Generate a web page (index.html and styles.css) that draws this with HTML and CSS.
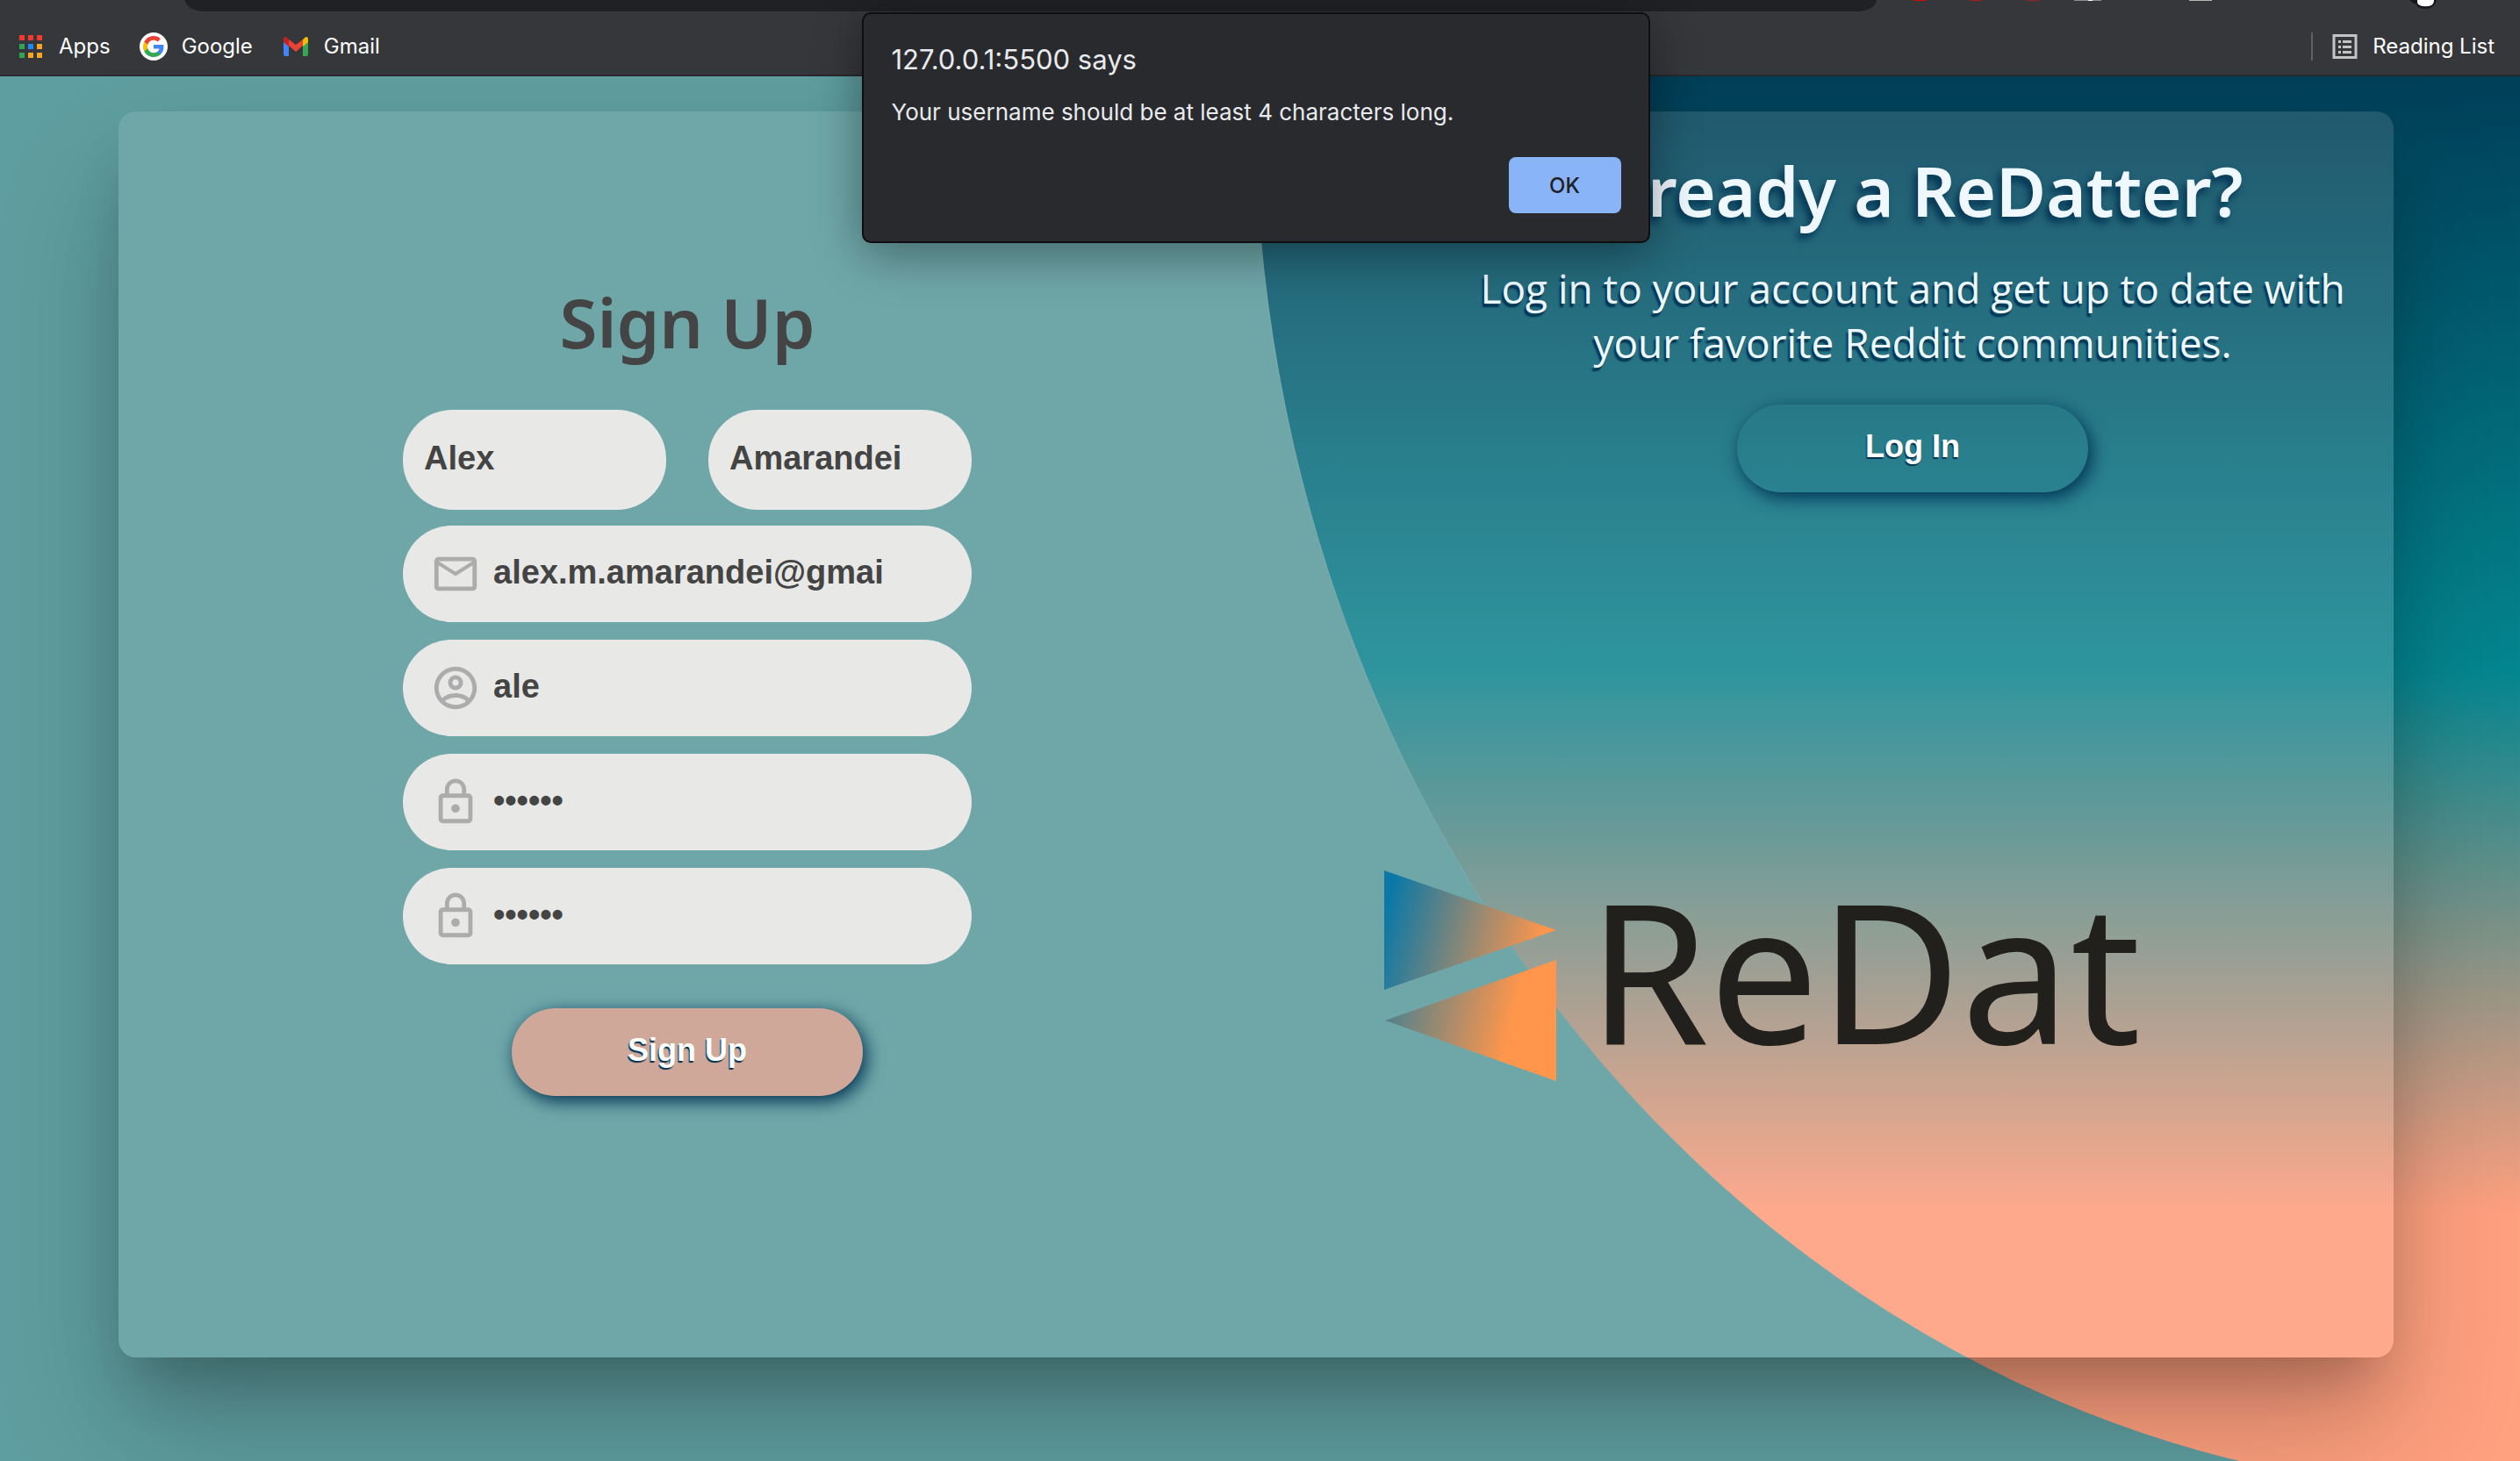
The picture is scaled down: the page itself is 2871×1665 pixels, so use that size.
FILE: index.html
```html
<!DOCTYPE html>
<html lang="en">
<head>
<meta charset="utf-8">
<title>ReDat</title>
<link rel="stylesheet" href="styles.css">
</head>
<body>
<header class="toolbar">
  <div class="address-row">
    <div class="omnibox"></div>
    <svg class="extensions" viewBox="0 0 733 14" aria-hidden="true">
      <path d="M42 0h14v1H42z" fill="#d60a0a"/>
      <path d="M106 0h14v1h-14z" fill="#a81a20"/>
      <path d="M167 0h22q-11 3-22 0z" fill="#7a2a2e"/>
      <path d="M225 0h31v1h-31z" fill="#8d918d"/>
      <path d="M241 0h5v1h-5z" fill="#fff"/>
      <path d="M356 0h26v1h-26z" fill="#b4b8b4"/>
      <path d="M608 0h30q-2 9-12 10-9 0-11-5-6-2-7-5z" fill="#15151c"/>
      <path d="M616 0h19q0 4-3 6-4 2-10 1-5-1-6-4z" fill="#fff"/>
    </svg>
  </div>
  <nav class="bookmarks">
    <a class="bookmark" href="#apps">
      <svg class="favicon" viewBox="0 0 32 32" aria-hidden="true">
        <path d="M3 3h6v6H3zM13 3h6v6h-6zM23 3h6v6h-6z" fill="#f5372f"/>
        <path d="M3 13h6v6H3zM3 23h6v6H3z" fill="#33a457"/>
        <path d="M13 13h6v6h-6z" fill="#1e88f5"/>
        <path d="M23 13h6v6h-6zM13 23h6v6h-6zM23 23h6v6h-6z" fill="#f5a623"/>
      </svg>
      Apps
    </a>
    <a class="bookmark" href="#google">
      <svg class="favicon" viewBox="0 0 32 32" aria-hidden="true">
        <circle cx="16" cy="16" r="16" fill="#fff"/>
        <g transform="translate(4 4)">
          <path d="M23.5 12.3c0-.9-.1-1.6-.2-2.4H12v4.5h6.500c-.3 1.500-1.100 2.700-2.400 3.600v3h3.900c2.200-2.100 3.500-5.100 3.500-8.700z" fill="#4285f4"/>
          <path d="M12 24c3.200 0 6-1.100 8-2.900l-3.900-3c-1.100.7-2.500 1.200-4.100 1.200-3.100 0-5.800-2.100-6.700-5H1.300v3.100C3.300 21.300 7.300 24 12 24z" fill="#34a853"/>
          <path d="M5.300 14.300c-.5-1.500-.5-3.100 0-4.600V6.600H1.300c-1.700 3.400-1.700 7.400 0 10.800z" fill="#fbbc05"/>
          <path d="M12 4.800c1.800 0 3.300.6 4.600 1.800L20 3.200C17.900 1.200 15.200 0 12 0 7.300 0 3.300 2.700 1.300 6.600l4 3.100c.9-2.900 3.600-4.900 6.700-4.900z" fill="#ea4335"/>
        </g>
      </svg>
      Google
    </a>
    <a class="bookmark" href="#gmail">
      <svg class="favicon" viewBox="0 0 32 32" aria-hidden="true">
        <path d="M2 10l6 5v12H4q-2 0-2-2z" fill="#4285f4"/>
        <path d="M30 10l-6 5v12h4q2 0 2-2z" fill="#34a853"/>
        <path d="M8 8l8 6 8-6v7l-8 7-8-7z" fill="#ea4335"/>
        <path d="M2 10V8q0-3 2-3 1 0 4 3v8l-6-5z" fill="#c5221f"/>
        <path d="M30 10V8q0-3-2-3-1 0-4 3v8l6-5z" fill="#fbbc04"/>
      </svg>
      Gmail
    </a>
    <a class="bookmark reading-list" href="#reading-list">
      <svg class="favicon" viewBox="0 0 32 32" aria-hidden="true">
        <path d="M4 3.500h25v25H4z" fill="none" stroke="#c4c4c4" stroke-width="3"/>
        <path d="M9 9h3v3H9zM14 9h10v3H14zM9 15h3v3H9zM14 15h10v3H14zM9 21h3v3H9zM14 21h10v3H14z" fill="#c4c4c4"/>
      </svg>
      Reading List
    </a>
  </nav>
</header>

<main class="page">
  <div class="card">
    <form class="signup">
      <h1 class="signup-title">Sign Up</h1>
      <div class="name-row">
        <input class="name-input" type="text" aria-label="First name" value="Alex">
        <input class="name-input" type="text" aria-label="Last name" value="Amarandei">
      </div>
      <div class="fields">
        <label class="field">
          <svg class="field-icon" viewBox="0 0 24 24" aria-hidden="true"><path d="M20 4H4c-1.100 0-2 .9-2 2v12c0 1.100.9 2 2 2h16c1.100 0 2-.9 2-2V6c0-1.100-.9-2-2-2zm0 14H4V8l8 5 8-5v10zm-8-7L4 6h16l-8 5z"/></svg>
          <input class="field-input" type="text" aria-label="Email" value="alex.m.amarandei@gmai">
        </label>
        <label class="field">
          <svg class="field-icon" viewBox="0 0 24 24" aria-hidden="true"><path d="M12 2C6.480 2 2 6.480 2 12s4.480 10 10 10 10-4.480 10-10S17.520 2 12 2zM7.070 18.280c.43-.9 3.050-1.780 4.930-1.780s4.510.88 4.930 1.780C15.570 19.360 13.860 20 12 20s-3.570-.64-4.930-1.720zm11.290-1.450c-1.430-1.740-4.900-2.330-6.360-2.330s-4.930.59-6.360 2.330C4.620 15.490 4 13.820 4 12c0-4.410 3.590-8 8-8s8 3.590 8 8c0 1.820-.62 3.490-1.640 4.830zM12 6c-1.940 0-3.500 1.560-3.500 3.500S10.060 13 12 13s3.500-1.560 3.500-3.500S13.940 6 12 6zm0 5c-.83 0-1.500-.67-1.500-1.500S11.170 8 12 8s1.500.67 1.500 1.500S12.830 11 12 11z"/></svg>
          <input class="field-input" type="text" aria-label="Username" value="ale">
        </label>
        <label class="field">
          <svg class="field-icon" viewBox="0 0 24 24" aria-hidden="true"><path d="M12 17c1.100 0 2-.9 2-2s-.9-2-2-2-2 .9-2 2 .9 2 2 2zm6-9h-1V6c0-2.760-2.240-5-5-5S7 3.240 7 6v2H6c-1.100 0-2 .9-2 2v10c0 1.100.9 2 2 2h12c1.100 0 2-.9 2-2V10c0-1.100-.9-2-2-2zM9 6c0-1.660 1.340-3 3-3s3 1.340 3 3v2H9V6zm9 14H6V10h12v10z"/></svg>
          <input class="field-input" type="password" aria-label="Password" value="secret">
        </label>
        <label class="field">
          <svg class="field-icon" viewBox="0 0 24 24" aria-hidden="true"><path d="M12 17c1.100 0 2-.9 2-2s-.9-2-2-2-2 .9-2 2 .9 2 2 2zm6-9h-1V6c0-2.760-2.240-5-5-5S7 3.240 7 6v2H6c-1.100 0-2 .9-2 2v10c0 1.100.9 2 2 2h12c1.100 0 2-.9 2-2V10c0-1.100-.9-2-2-2zM9 6c0-1.660 1.340-3 3-3s3 1.340 3 3v2H9V6zm9 14H6V10h12v10z"/></svg>
          <input class="field-input" type="password" aria-label="Confirm password" value="secret">
        </label>
      </div>
      <button class="pill-button signup-button" type="submit">Sign Up</button>
    </form>

    <section class="login">
      <div class="login-copy">
        <h2 class="login-title">Already a ReDatter?</h2>
        <p class="login-text">Log in to your account and get up to date with your favorite Reddit communities.</p>
        <button class="pill-button login-button" type="button">Log In</button>
      </div>
      <div class="brand">
        <svg class="brand-mark" viewBox="0 0 198 242" aria-hidden="true">
          <defs>
            <linearGradient id="upper" gradientUnits="userSpaceOnUse" x1="4" y1="40" x2="180" y2="84">
              <stop offset="0" stop-color="#0b78a6"/>
              <stop offset="1" stop-color="#ff964b"/>
            </linearGradient>
            <linearGradient id="lower" gradientUnits="userSpaceOnUse" x1="-50" y1="148" x2="142" y2="192">
              <stop offset="0" stop-color="#0b78a6"/>
              <stop offset="1" stop-color="#ff964b"/>
            </linearGradient>
          </defs>
          <path d="M0 1l196 68L0 137z" fill="url(#upper)"/>
          <path d="M196 103v138L1 172z" fill="url(#lower)"/>
        </svg>
        <span class="brand-name">ReDat</span>
      </div>
    </section>
  </div>
</main>

<div class="alert" role="alertdialog" aria-labelledby="alert-title" aria-describedby="alert-text">
  <h2 class="alert-title" id="alert-title">127.0.0.1:5500 says</h2>
  <p class="alert-text" id="alert-text">Your username should be at least 4 characters long.</p>
  <button class="alert-ok" type="button">OK</button>
</div>
</body>
</html>
```
FILE: styles.css
```css
* {
  box-sizing: border-box;
}

body {
  margin: 0;
  min-height: 100vh;
  display: flex;
  flex-direction: column;
  overflow: hidden;
  background: #5f9ea0;
  font-family: "Open Sans", "Noto Sans", sans-serif;
}

/* browser toolbar */
.toolbar {
  flex: none;
  height: 87px;
  background: #36373b;
  border-bottom: 2px solid #28292c;
  font-family: Inter, Roboto, sans-serif;
}

.address-row {
  display: flex;
  height: 13px;
  padding-left: 211px;
}

.omnibox {
  flex: 1;
  background: #202125;
  border-radius: 0 0 22px 22px / 0 0 13px 13px;
}

.extensions {
  flex: none;
  width: 733px;
  height: 14px;
}

.bookmarks {
  display: flex;
  align-items: center;
  gap: 33px;
  height: 80px;
  padding: 0 29px 0 19px;
}

.bookmark {
  display: flex;
  align-items: center;
  gap: 16px;
  color: #fff;
  font-size: 24px;
  line-height: 32px;
  text-decoration: none;
}

.favicon {
  width: 32px;
  height: 32px;
}

.reading-list {
  margin-left: auto;
  padding-left: 20px;
  border-left: 2px solid #5f6063;
}

/* page */
.page {
  position: relative;
  flex: 1;
  padding: 40px 144px 118px 135px;
  overflow: hidden;
}

.page::before {
  content: "";
  position: absolute;
  inset: 0;
  background: linear-gradient(#003f58 0%, #048690 43%, #ffa07f 82%);
  clip-path: ellipse(49.6% 100.6% at 99.4% 1.7%);
}

.card {
  position: relative;
  z-index: 0;
  display: flex;
  min-height: 1420px;
  border-radius: 20px;
  background: rgba(255, 255, 255, 0.1);
  box-shadow: 0 80px 140px rgba(0, 0, 0, 0.22), 0 40px 60px -20px rgba(0, 0, 0, 0.22);
}

/* warmer glass where the card covers the ellipse */
.card::before {
  content: "";
  position: absolute;
  inset: 0;
  z-index: -1;
  border-radius: inherit;
  background: linear-gradient(rgba(255, 180, 190, 0.03), rgba(255, 180, 190, 0.08) 45%, rgba(255, 180, 150, 0.02) 88%);
  clip-path: ellipse(55% 111.8% at 104.9% -0.9%);
}

.signup,
.login,
.login-copy {
  display: flex;
  flex-direction: column;
  align-items: center;
}

.signup {
  flex: 0 0 50%;
  padding-top: 184px;
}

.signup-title,
.login-title {
  margin: 0;
  font-family: "Noto Sans", "Open Sans", sans-serif;
  font-size: 78px;
  line-height: 112px;
  font-weight: 600;
}

.signup-title {
  margin-bottom: 44px;
  color: #444;
}

.name-row {
  display: flex;
  gap: 48px;
  width: 648px;
  margin-bottom: 18px;
}

.name-input,
.field-input {
  min-width: 0;
  flex: 1;
  border: 0;
  outline: 0;
  color: #444;
  background: none;
  font: 700 38px "Liberation Sans", Arial, sans-serif;
}

.name-input {
  height: 114px;
  padding: 0 24px 4px;
  border-radius: 56px;
  background: #e8e8e6;
}

.fields {
  display: flex;
  flex-direction: column;
  gap: 20px;
  width: 648px;
}

.field {
  display: flex;
  align-items: center;
  gap: 14px;
  height: 110px;
  padding: 0 32px 0 31px;
  border-radius: 56px;
  background: #e8e8e6;
}

.field-icon {
  flex: none;
  width: 58px;
  height: 58px;
  fill: #acacac;
}

.field-input {
  height: 110px;
  padding: 0 0 4px;
}

.pill-button {
  width: 400px;
  height: 100px;
  padding: 0 0 4px;
  border: 0;
  border-radius: 50px;
  color: #fff;
  font: 700 36px "Liberation Sans", Arial, sans-serif;
  text-shadow: -1px 2px 1px #003152;
  box-shadow: 4px 6px 20px #003152;
}

.signup-button {
  margin-top: 50px;
  background: #d0a89a;
}

.login-button {
  margin-top: 40px;
  background: transparent;
}

.login {
  flex: 1;
  align-items: flex-start;
  padding: 34px 38px 0 146px;
}

.login-copy {
  align-self: flex-end;
  width: 1020px;
  color: #f0f8ff;
}

.login-title {
  text-shadow: -4px 6px 8px #003152;
}

.login-text {
  margin: 24px 0 0;
  font-size: 46px;
  line-height: 62px;
  text-align: center;
  text-shadow: -2px 4px 2px #003152;
}

.brand {
  display: flex;
  gap: 34px;
  margin-top: 430px;
  color: #21201c;
}

.brand-mark {
  width: 198px;
  height: 242px;
}

.brand-name {
  font-family: "Noto Sans", sans-serif;
  font-size: 222px;
  line-height: 226px;
}

/* alert box over the page */
.alert {
  position: absolute;
  top: 14px;
  left: 50%;
  display: flex;
  flex-direction: column;
  width: 898px;
  margin-left: -454px;
  padding: 30px 31px 32px 32px;
  border: 2px solid #0e0e10;
  border-radius: 10px;
  background: #292a2d;
  color: #e8eaed;
  font-family: Inter, Roboto, sans-serif;
  box-shadow: 0 12px 56px rgba(0, 0, 0, 0.4);
}

.alert-title {
  margin: 0;
  font-size: 31px;
  line-height: 44px;
  font-weight: 400;
}

.alert-text {
  margin: 22px 0 35px;
  font-size: 26px;
  line-height: 32px;
}

.alert-ok {
  align-self: flex-end;
  width: 128px;
  height: 64px;
  border: 0;
  border-radius: 8px;
  background: #8ab4f8;
  color: #202124;
  font: 500 24px Inter, Roboto, sans-serif;
}
```
